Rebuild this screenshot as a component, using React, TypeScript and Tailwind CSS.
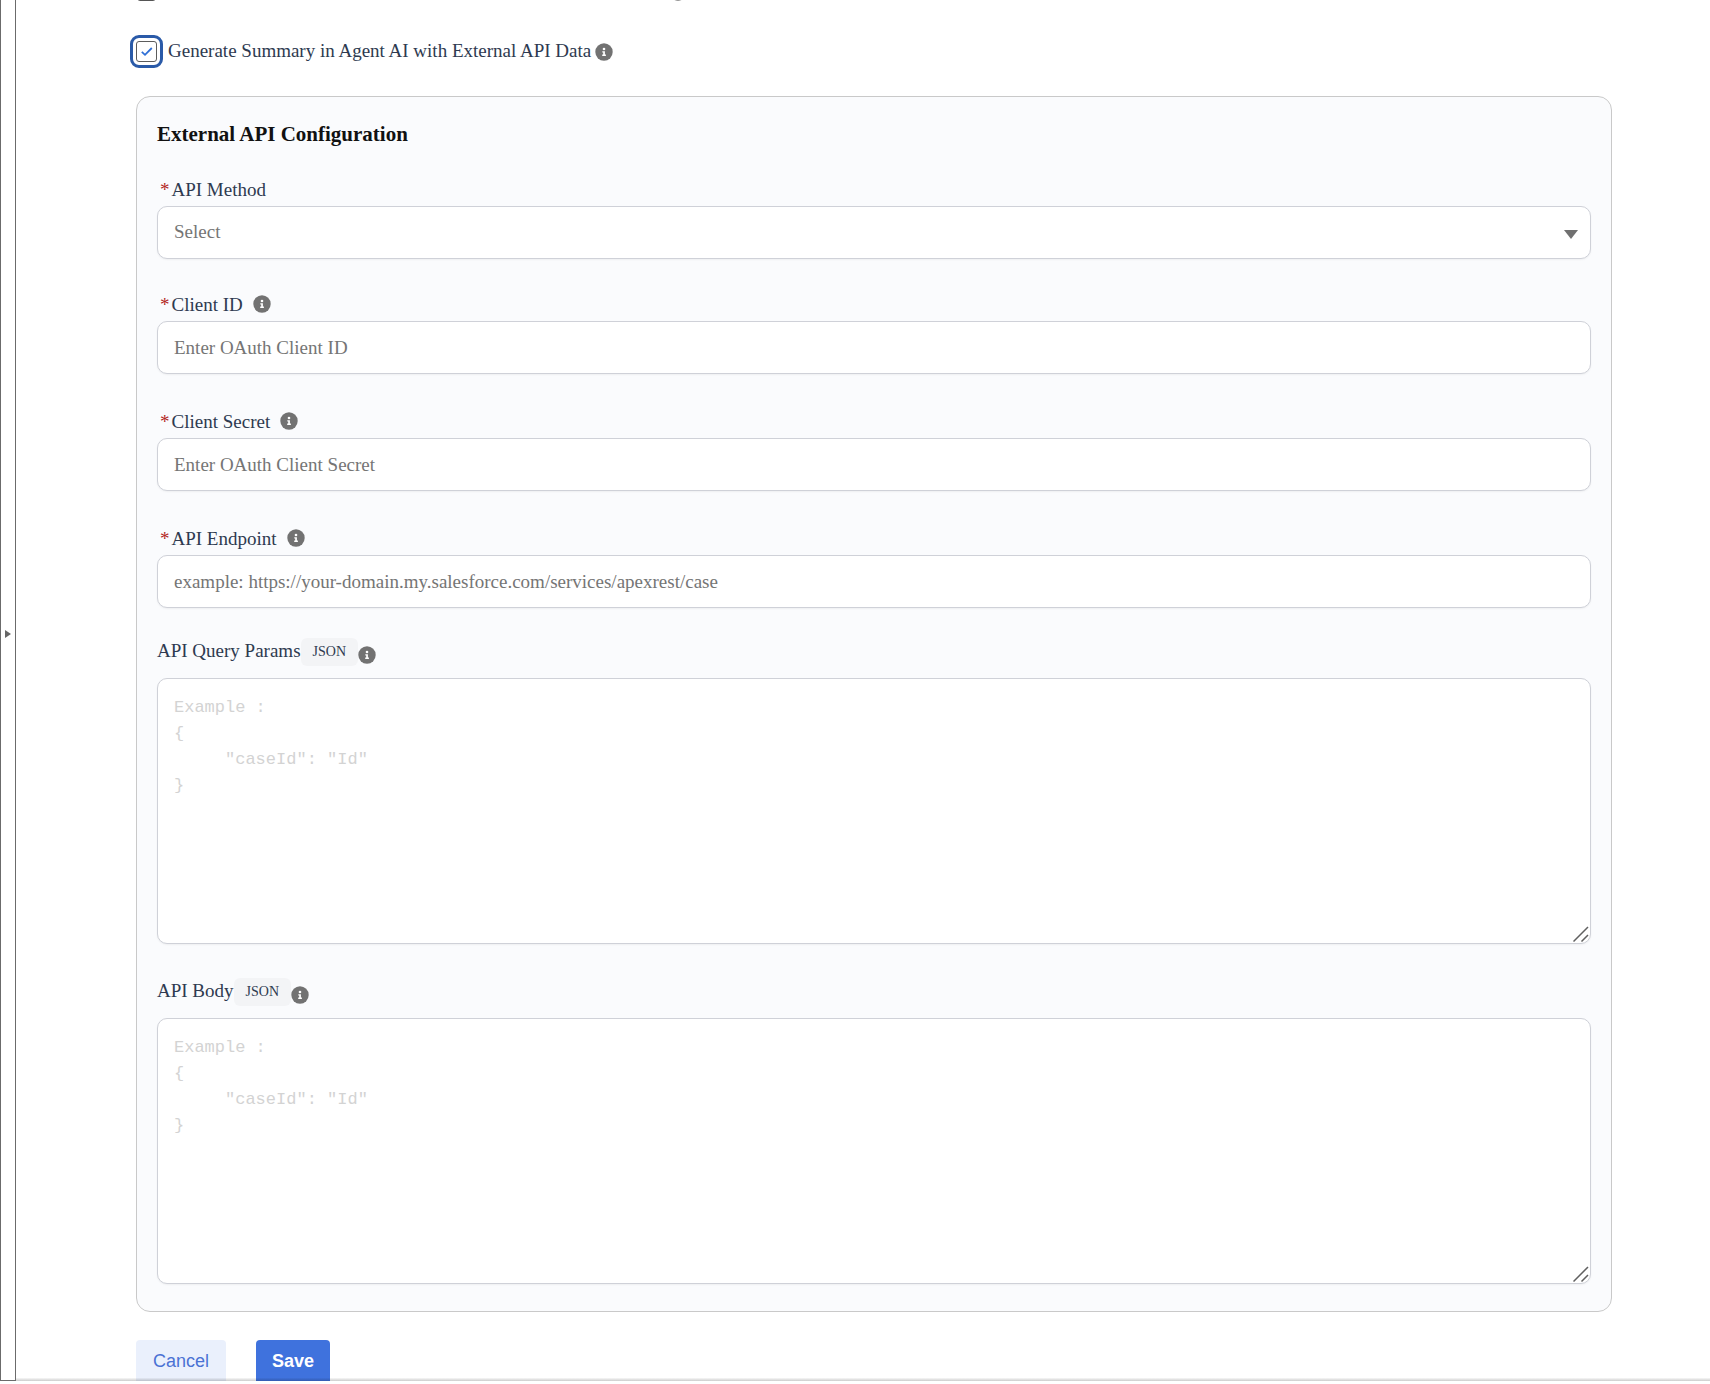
import { useState } from "react"

const JSON_EXAMPLE = `Example :
{
     "caseId": "Id"
}`

function InfoButton({ label }: { label: string }) {
  return (
    <button type="button" aria-label={`About ${label}`} className="shrink-0">
      <svg width="18" height="18" viewBox="0 0 18 18" fill="none">
        <circle cx="9" cy="9" r="8.7" fill="#727272" />
        <circle cx="9" cy="6" r="1.3" fill="#fff" />
        <path d="M7.3 8.2H9.9V11.6H10.9V12.9H7.2V11.6H8.2V9.4H7.3Z" fill="#fff" />
      </svg>
    </button>
  )
}

function FieldLabel({ id, text, info }: { id: string; text: string; info?: boolean }) {
  return (
    <div className="flex h-[26px] items-start gap-[10px] pl-[3px]">
      <label htmlFor={id} className="flex gap-[2px] leading-5">
        <span className="text-[#b3261e]">*</span>
        {text}
      </label>
      {info && <InfoButton label={text} />}
    </div>
  )
}

function TextField({ id, label, placeholder }: { id: string; label: string; placeholder: string }) {
  return (
    <div>
      <FieldLabel id={id} text={label} info />
      <input
        id={id}
        type="text"
        placeholder={placeholder}
        className="block h-[53px] w-full rounded-[10px] border border-[#cfd1d8] bg-white px-4 shadow-xs placeholder:text-[#757575]"
      />
    </div>
  )
}

function JsonField({ id, label }: { id: string; label: string }) {
  return (
    <div>
      <div className="flex h-10 items-start">
        <label htmlFor={id} className="leading-[26px]">
          {label}
        </label>
        <span className="rounded-md bg-[#f3f4f6] px-3 text-sm leading-7">JSON</span>
        <span className="flex pt-2">
          <InfoButton label={label} />
        </span>
      </div>
      <div className="relative">
        <textarea
          id={id}
          placeholder={JSON_EXAMPLE}
          className="block h-[266px] w-full resize-none rounded-[10px] border border-[#cfd1d8] bg-white px-4 py-4 font-['Liberation_Mono',monospace] text-[17px] leading-[26px] shadow-xs placeholder:text-[#d3d3d3]"
        />
        <svg className="pointer-events-none absolute right-[2px] bottom-[2px] size-4" viewBox="0 0 16 16" stroke="#606060" strokeWidth="1.5">
          <path d="M0.5 15.5L15 1M8.5 15.5L15 9" />
        </svg>
      </div>
    </div>
  )
}

export default function App() {
  const [useExternal, setUseExternal] = useState(true)

  return (
    <div className="min-h-screen bg-white font-['Liberation_Serif',serif] text-[19px] text-[#2e3a50]">
      <div className="flex">
        <aside className="flex w-4 shrink-0 items-center justify-center border border-t-0 border-[#6b6b6b] pb-28">
          <button type="button" aria-label="Expand sidebar">
            <svg width="6" height="8" viewBox="0 0 6 8" fill="#666">
              <path d="M0 0L6 4L0 8Z" />
            </svg>
          </button>
        </aside>

        <main className="min-w-0 flex-1 pr-[98px] pl-[120px]">
          {/* Previous option, scrolled almost out of view */}
          <div className="flex h-px items-end overflow-hidden">
            <input type="checkbox" aria-label="Generate Summary in Agent AI" className="ml-px h-5 w-[19px] shrink-0 appearance-none rounded-[3px] border border-[#555]" />
            <span className="ml-[513px] flex">
              <InfoButton label="Agent AI summary" />
            </span>
          </div>

          <div className="flex h-[95px] items-start pt-10">
            <span className="relative mr-[11px] size-[21px] shrink-0">
              <input
                id="external"
                type="checkbox"
                checked={useExternal}
                onChange={(e) => setUseExternal(e.target.checked)}
                className="block size-[21px] appearance-none rounded-[3px] border border-[#5c5c5c] outline-3 outline-offset-3 outline-[#2a5aa8]"
              />
              {useExternal && (
                <svg className="pointer-events-none absolute inset-0 size-[21px]" viewBox="0 0 21 21" fill="none" stroke="#2f6fd6" strokeWidth="1.8">
                  <path d="M5.8 10.8L9 13.8L15.8 7" />
                </svg>
              )}
            </span>
            <label htmlFor="external" className="mr-1 leading-5">
              Generate Summary in Agent AI with External API Data
            </label>
            <span className="flex pt-[2px]">
              <InfoButton label="external API data" />
            </span>
          </div>

          <section className="rounded-[14px] border border-[#c9c9c9] bg-[#fafbfd] px-5 pt-6 pb-[27px]">
            <h2 className="mb-[33px] text-[21px] leading-[26px] font-bold text-[#111]">External API Configuration</h2>

            <FieldLabel id="method" text="API Method" />
            <div className="relative mb-9">
              <select
                id="method"
                defaultValue=""
                className="block h-[53px] w-full appearance-none rounded-[10px] border border-[#cfd1d8] bg-white px-4 text-[#757575] shadow-xs"
              >
                <option value="">Select</option>
                <option value="get">GET</option>
                <option value="post">POST</option>
              </select>
              <svg className="pointer-events-none absolute top-6 right-[13px] h-[9px] w-[14px]" viewBox="0 0 14 9" fill="#707070">
                <path d="M0 0H14L7 9Z" />
              </svg>
            </div>

            <div className="mb-[30px] flex flex-col gap-[38px]">
              <TextField id="client-id" label="Client ID" placeholder="Enter OAuth Client ID" />
              <TextField id="client-secret" label="Client Secret" placeholder="Enter OAuth Client Secret" />
              <TextField
                id="endpoint"
                label="API Endpoint"
                placeholder="example: https://your-domain.my.salesforce.com/services/apexrest/case"
              />
            </div>

            <div className="flex flex-col gap-[34px]">
              <JsonField id="query" label="API Query Params" />
              <JsonField id="body" label="API Body" />
            </div>
          </section>

          <div className="flex gap-[30px] pt-7 font-['Liberation_Sans',sans-serif] text-lg">
            <button type="button" className="h-[41px] rounded-t-[4px] bg-[#eaf0fc] px-[17px] text-[#4a72d4]">
              Cancel
            </button>
            <button type="button" className="h-[41px] rounded-t-[4px] bg-[#3f72dd] px-4 font-bold text-white">
              Save
            </button>
          </div>
        </main>
      </div>
      <footer className="relative -mt-[3px] ml-4 h-[3px] bg-linear-to-b from-black/3 to-black/20" />
    </div>
  )
}
